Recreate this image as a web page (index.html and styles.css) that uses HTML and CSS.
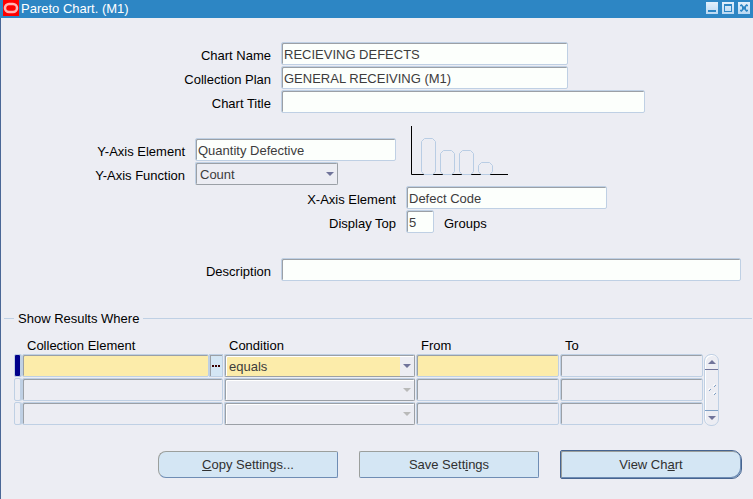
FILE: index.html
```
<!DOCTYPE html>
<html lang="en">
<head>
  <meta charset="UTF-8" />
  <meta name="viewport" content="width=device-width, initial-scale=1.0"/>
  <title>Pareto Chart. (M1)</title>
  <link rel="stylesheet" href="styles.css">
</head>
<body>
<div class="window">
  <header class="title-bar">
    <svg class="logo" width="16" height="16" viewBox="0 0 16 16">
      <rect width="16" height="16" fill="#ff0000"/>
      <rect x="2" y="4" width="12" height="8" rx="4" fill="none" stroke="#ffb4b4" stroke-width="2.500"/>
    </svg>
    <h1>Pareto Chart. (M1)</h1>
    <div class="window-buttons">
      <button type="button" aria-label="Minimize">
        <svg width="12" height="12" viewBox="0 0 12 12"><path d="M2 8h8v2H2z" fill="#2d86c4"/></svg>
      </button>
      <button type="button" aria-label="Maximize">
        <svg width="12" height="12" viewBox="0 0 12 12"><path d="M2 2h8v8H2zM3 4v5h6V4z" fill="#2d86c4" fill-rule="evenodd"/></svg>
      </button>
      <button type="button" aria-label="Close">
        <svg width="12" height="12" viewBox="0 0 12 12"><path d="M3 2.500l6 7M9 2.500l-6 7M2 3.500h2M8 3.500h2M2 8.500h2M8 8.500h2" stroke="#2d86c4" stroke-width="1.500"/><path d="M4 5h4v2H4z" fill="#2d86c4"/></svg>
      </button>
    </div>
  </header>

  <form>
    <div class="group">
      <div class="row">
        <label for="chartName">Chart Name</label>
        <input type="text" id="chartName" class="field medium" value="RECIEVING DEFECTS">
      </div>
      <div class="row">
        <label for="plan">Collection Plan</label>
        <input type="text" id="plan" class="field medium" value="GENERAL RECEIVING (M1)">
      </div>
      <div class="row">
        <label for="chartTitle">Chart Title</label>
        <input type="text" id="chartTitle" class="field large">
      </div>
    </div>

    <div class="axes">
      <div class="group y-axis">
        <div class="row">
          <label for="yElement">Y-Axis Element</label>
          <input type="text" id="yElement" class="field small" value="Quantity Defective">
        </div>
        <div class="row">
          <label for="yFunction">Y-Axis Function</label>
          <span class="select-box count-box">
            <select id="yFunction"><option>Count</option></select>
          </span>
        </div>
      </div>
      <svg class="chart-icon" width="98" height="50" viewBox="0 0 98 50" fill="none">
        <path d="M.5 0v48.500H13M22 48.500h10M41 48.500h10M60 48.500h10M79 48.500h18" stroke="#000"/>
        <g stroke="#b9cde4">
          <path d="M13 48.500l-2.500-3V15.500l3-3h8l3 3v30l-2.500 3z"/>
          <path d="M32 48.500l-2.500-3V27.500l3-3h8l3 3v18l-2.500 3z"/>
          <path d="M51 48.500l-2.500-3V27.500l3-3h8l3 3v18l-2.500 3z"/>
          <path d="M70 48.500l-2.500-3V39.500l3-3h8l3 3v6l-2.500 3z"/>
        </g>
      </svg>
    </div>

    <div class="group x-axis">
      <div class="row">
        <label for="xElement">X-Axis Element</label>
        <input type="text" id="xElement" class="field small" value="Defect Code">
      </div>
      <div class="row">
        <label for="top">Display Top</label>
        <input type="text" id="top" class="field tiny" value="5">
        <span class="suffix">Groups</span>
      </div>
    </div>

    <div class="group description">
      <div class="row">
        <label for="description">Description</label>
        <input type="text" id="description" class="field fill">
      </div>
    </div>

    <fieldset>
      <legend>Show Results Where</legend>
      <div class="results">
        <table>
          <thead>
            <tr>
              <th class="col-marker"></th>
              <th class="col-element">Collection Element</th>
              <th class="col-condition">Condition</th>
              <th class="col-value">From</th>
              <th class="col-value">To</th>
            </tr>
          </thead>
          <tbody>
            <tr class="current">
              <td><span class="marker"></span></td>
              <td>
                <div class="lov">
                  <input type="text" class="field required" aria-label="Collection Element">
                  <button type="button" aria-label="List of values">
                    <svg width="8" height="2" viewBox="0 0 8 2"><path d="M0 0h2v2H0zM3 0h2v2H3zM6 0h2v2H6z" fill="#3a0000"/></svg>
                  </button>
                </div>
              </td>
              <td>
                <span class="select-box required">
                  <select aria-label="Condition"><option>equals</option></select>
                </span>
              </td>
              <td><input type="text" class="field required" aria-label="From"></td>
              <td><input type="text" class="field" aria-label="To" disabled></td>
            </tr>
            <tr>
              <td><span class="marker"></span></td>
              <td><input type="text" class="field" aria-label="Collection Element" disabled></td>
              <td><span class="select-box off"><select aria-label="Condition" disabled></select></span></td>
              <td><input type="text" class="field" aria-label="From" disabled></td>
              <td><input type="text" class="field" aria-label="To" disabled></td>
            </tr>
            <tr>
              <td><span class="marker"></span></td>
              <td><input type="text" class="field" aria-label="Collection Element" disabled></td>
              <td><span class="select-box off"><select aria-label="Condition" disabled></select></span></td>
              <td><input type="text" class="field" aria-label="From" disabled></td>
              <td><input type="text" class="field" aria-label="To" disabled></td>
            </tr>
          </tbody>
        </table>
        <div class="scrollbar">
          <button type="button" class="up" aria-label="Scroll up"></button>
          <div class="thumb">
            <svg width="8" height="12" viewBox="0 0 8 12">
              <path d="M5 2l2-2M0 6l2-2M5 10l2-2" stroke="#fff"/>
              <path d="M6 3l2-2M1 7l2-2M6 11l2-2" stroke="#7f9fc4"/>
            </svg>
          </div>
          <button type="button" class="down" aria-label="Scroll down"></button>
        </div>
      </div>
    </fieldset>

    <div class="actions">
      <button type="button" class="copy"><u>C</u>opy Settings...</button>
      <button type="button">Save Sett<u>i</u>ngs</button>
      <button type="button" class="default">View Ch<u>a</u>rt</button>
    </div>
  </form>
</div>
</body>
</html>
```
FILE: styles.css
```
* {
  box-sizing: border-box;
}

body {
  margin: 0;
  background: #ecedf3;
  color: #000;
}

body, input, select, button {
  font-family: "Liberation Sans", Arial, sans-serif;
  font-size: 13px;
}

.window {
  min-height: 100vh;
  border-left: 1px solid #4a6796;
}

.title-bar {
  display: flex;
  align-items: center;
  height: 18px;
  margin-left: -1px;
  padding: 0 3px;
  background: #2d86c4;
}

.title-bar h1 {
  flex: 1;
  margin: 0 0 0 2px;
  color: white;
  font-size: 13px;
  font-weight: normal;
  line-height: 18px;
}

.logo {
  display: block;
  margin-bottom: 2px;
}

.window-buttons {
  display: flex;
  gap: 4px;
  margin-bottom: 2px;
}

.window-buttons button {
  width: 12px;
  height: 12px;
  padding: 0;
  border: none;
  background: linear-gradient(#e2f0fc, #b9d8f2);
}

.window-buttons svg {
  display: block;
}

form {
  padding-top: 24px;
}

.group {
  display: flex;
  flex-direction: column;
  gap: 1px;
}

.row {
  display: flex;
  gap: 10px;
}

.row label {
  width: 270px;
  text-align: right;
}

.row label, .suffix {
  height: 23px;
  line-height: 28px;
}

.field {
  display: block;
  width: 100%;
  height: 23px;
  padding: 2px 2px 0;
  border: 1px solid #bfd0e4;
  border-radius: 2px;
  box-shadow: inset 1px 1px 0 #9ba0a6;
  background: #fcfffc;
  color: #3c3c3c;
}

.field:disabled {
  background: #ecedf3;
}

.field.medium {
  width: 287px;
}

.field.large {
  width: 364px;
}

.field.small {
  width: 201px;
}

.field.tiny {
  width: 28px;
}

.field.fill {
  flex: 1;
}

.field.required {
  background: #fcecaa;
}

.axes {
  display: flex;
  align-items: flex-end;
  margin-top: 12px;
}

.y-axis .row label {
  width: 184px;
}

.chart-icon {
  margin: 0 0 9px 15px;
}

.x-axis {
  margin-top: 1px;
}

.x-axis .row label {
  width: 395px;
}

.y-axis {
  margin-top: 13px;
}

.description {
  margin: 25px 12px 0 0;
}

.select-box {
  display: block;
  position: relative;
  height: 23px;
}

.count-box {
  width: 143px;
}

.select-box select {
  display: block;
  appearance: none;
  width: 100%;
  height: 23px;
  padding: 1px 20px 0 4px;
  border: 1px solid #9ba0a6;
  border-top-color: #bfd0e4;
  border-left-color: #bfd0e4;
  border-radius: 2px;
  box-shadow: inset 1px 1px 0 #9ba0a6;
  background: #ecedf3;
  color: #3c3c3c;
  opacity: 1;
}

.select-box.required select {
  background: linear-gradient(to left, #ecedf3 14px, #fcecaa 14px);
}

.select-box.required select, .select-box.off select {
  box-shadow: inset 1px 1px 0 #9ba0a6, inset 2px 2px 0 white;
}

.select-box::after {
  content: "";
  position: absolute;
  right: 4px;
  top: 10px;
  border: 4px solid transparent;
  border-top-color: #70749a;
  border-bottom: none;
}

.select-box.off::after {
  border-top-color: #b9bab9;
}

fieldset {
  margin: 29px 1px 0 3px;
  padding: 11px 0 0;
  border: none;
  border-top: 1px solid #bfd0e4;
}

legend {
  margin-left: 10px;
  padding: 0 4px;
  line-height: 17px;
}

.results {
  display: flex;
  align-items: flex-end;
  padding-left: 9px;
}

table {
  table-layout: fixed;
  width: 691px;
  border-spacing: 1px;
}

th, td {
  padding: 0;
}

th {
  height: 14px;
  padding-left: 5px;
  font-weight: normal;
  line-height: 14px;
  text-align: left;
}

.col-marker {
  width: 7px;
  padding: 0;
}

.col-element {
  width: 201px;
}

.col-condition {
  width: 191px;
}

.col-value {
  width: 143px;
}

.marker {
  display: block;
  height: 23px;
  border: 1px solid #bfd0e4;
  border-radius: 2px;
  box-shadow: 1px 0 0 #bfd0e4;
}

.current .marker {
  background: #00008b;
}

.lov {
  display: flex;
}

.lov button {
  flex: none;
  display: flex;
  align-items: center;
  justify-content: center;
  width: 14px;
  height: 23px;
  padding: 0;
  border: 1px solid #bfd0e4;
  box-shadow: inset 1px 1px 0 #9ba0a6;
  background: #d4e6f4;
}

.scrollbar {
  display: flex;
  flex-direction: column;
  width: 15px;
  height: 72px;
  border: 1px solid #bfd0e4;
  border-radius: 7px;
  box-shadow: inset 1px 1px 0 white;
}

.scrollbar button {
  display: flex;
  align-items: center;
  justify-content: center;
  height: 14px;
  padding: 0;
  border: none;
  background: none;
}

.scrollbar button::before {
  content: "";
  border: 4px solid transparent;
}

.scrollbar .up::before {
  border-bottom-color: #70749a;
  border-top: none;
}

.scrollbar .down::before {
  border-top-color: #70749a;
  border-bottom: none;
}

.thumb {
  flex: 1;
  display: flex;
  align-items: center;
  justify-content: center;
  border-top: 1px solid #70749a;
  border-bottom: 1px solid #7f9fc4;
}

.actions {
  display: flex;
  align-items: center;
  justify-content: flex-end;
  gap: 21px;
  padding: 24px 11px 20px 0;
}

.actions button {
  width: 180px;
  height: 27px;
  border: 1px solid #9b9f9c;
  border-right-color: #6f8db4;
  border-bottom-color: #6f8db4;
  border-radius: 2px;
  background: #d4e6f4;
  color: #303030;
}

.actions .copy {
  border-radius: 8px 2px 2px 8px;
}

.actions .default {
  width: 182px;
  height: 29px;
  border: 1px solid #466490;
  border-radius: 2px 10px 10px 2px;
  box-shadow: inset 1px 1px 0 #9b9f9c, inset -1px -1px 0 #6f8db4;
}
```
